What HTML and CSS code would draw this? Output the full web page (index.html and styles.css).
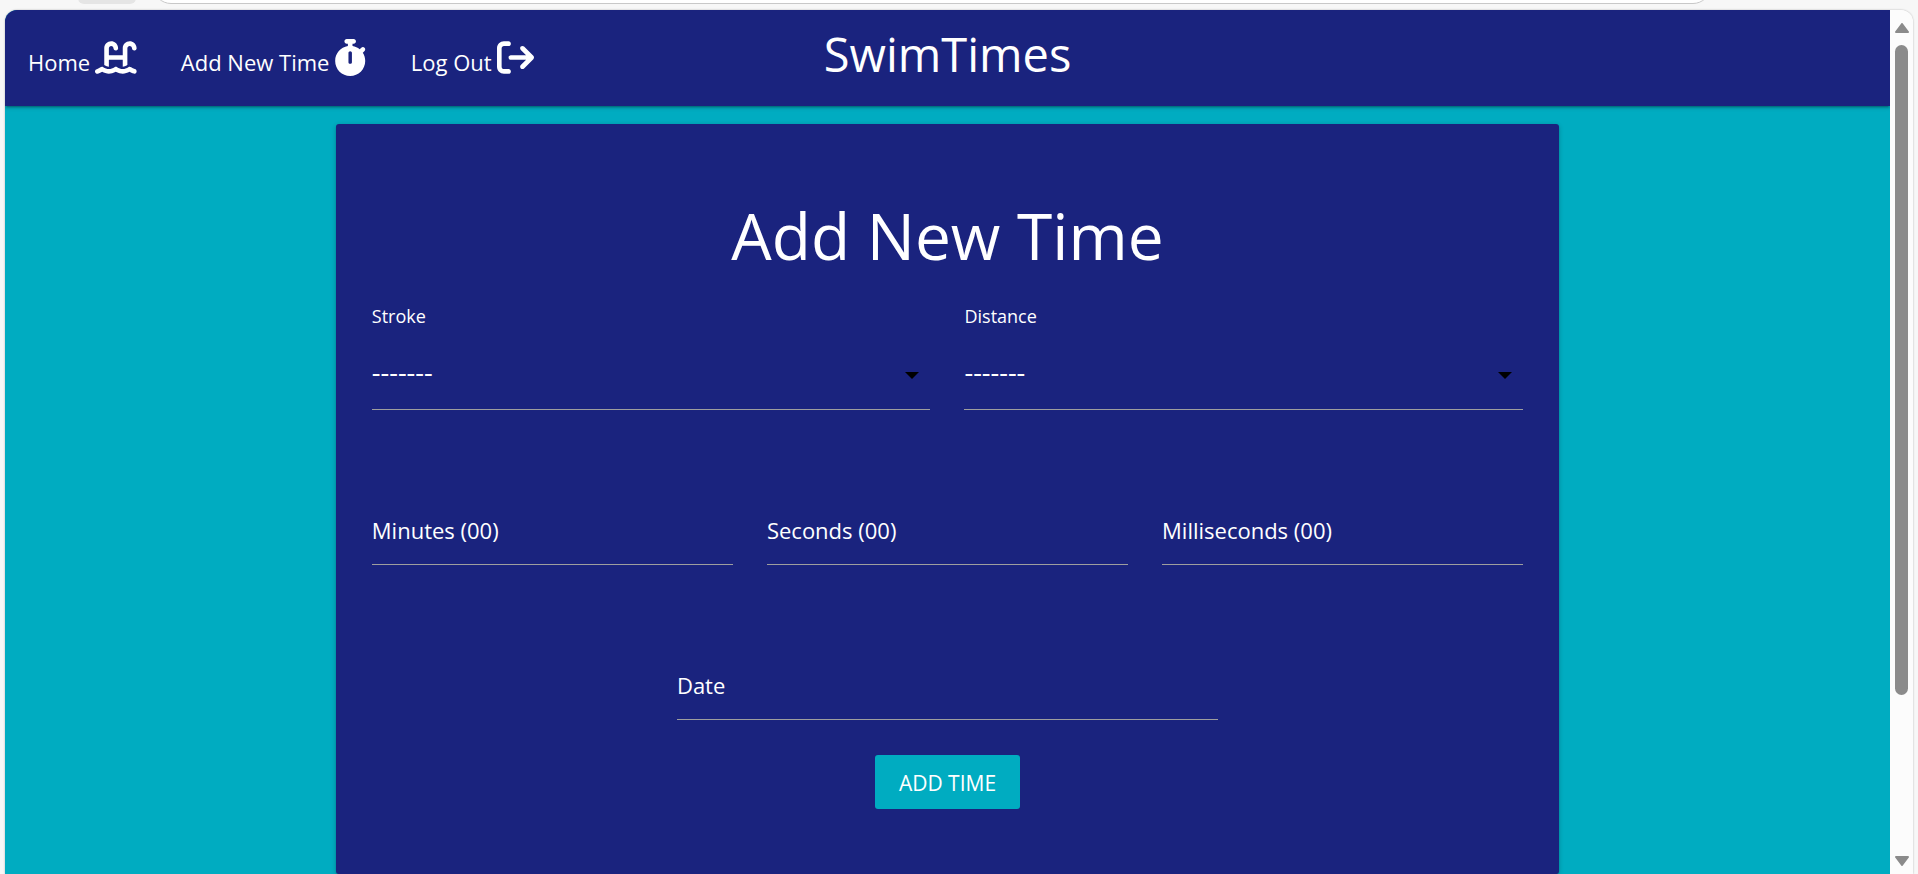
FILE: index.html
```html
<!DOCTYPE html>
<html lang="en">
<head>
<meta charset="utf-8">
<title>SwimTimes - Add New Time</title>
<link rel="stylesheet" href="styles.css">
</head>
<body>
<div class="toolbar" aria-hidden="true">
  <div class="toolbar-chip"></div>
  <div class="toolbar-address"></div>
</div>
<div class="window">
  <div class="page">
    <nav class="navbar">
      <div class="nav-links">
        <a class="nav-link" href="#">Home
          <svg class="icon" viewBox="0 0 576 512" aria-hidden="true"><path d="M128 127.7C128 74.9 170.9 32 223.7 32c48.3 0 89 36 95 83.9l1 8.2c2.2 17.5-10.2 33.5-27.8 35.7s-33.5-10.2-35.7-27.8l-1-8.2c-2-15.9-15.5-27.8-31.5-27.8c-17.5 0-31.7 14.2-31.7 31.7V224H384V127.7C384 74.9 426.9 32 479.7 32c48.3 0 89 36 95 83.9l1 8.2c2.2 17.5-10.2 33.5-27.8 35.7s-33.5-10.2-35.7-27.8l-1-8.2c-2-15.9-15.5-27.8-31.5-27.8c-17.5 0-31.7 14.2-31.7 31.7V361c-1.6 1-3.3 2-4.8 3.1c-18 12.4-40.1 20.3-59.2 20.3h0V288H192v96.5c-19 0-41.2-7.9-59.1-20.3c-1.6-1.1-3.2-2.2-4.9-3.1V127.7zM306.5 389.9C329 405.4 356.5 416 384 416c26.9 0 55.4-10.8 77.4-26.1l0 0c11.9-8.5 28.1-7.8 39.2 1.7c14.4 11.9 32.5 21 50.6 25.2c17.2 4 27.9 21.2 23.9 38.4s-21.2 27.9-38.4 23.9c-24.5-5.7-44.9-16.5-58.2-25C449.5 469.7 417 480 384 480c-31.9 0-60.6-9.9-80.4-18.9c-5.8-2.7-11.1-5.3-15.6-7.7c-4.5 2.4-9.7 5.1-15.6 7.7c-19.8 9-48.5 18.9-80.4 18.9c-33 0-65.5-10.3-94.5-25.8c-13.4 8.4-33.7 19.3-58.2 25c-17.2 4-34.4-6.7-38.4-23.9s6.7-34.4 23.9-38.4c18.1-4.2 36.2-13.3 50.6-25.2c11.1-9.4 27.3-10.1 39.2-1.7l0 0C136.7 405.2 165.1 416 192 416c27.5 0 55-10.6 77.5-26.1c11.1-7.9 25.9-7.9 37 0z"/></svg>
        </a>
        <a class="nav-link" href="#">Add New Time
          <svg class="icon" viewBox="0 0 448 512" aria-hidden="true"><path d="M176 0c-17.7 0-32 14.3-32 32s14.3 32 32 32h16V98.4C92.3 113.8 16 200 16 304c0 114.9 93.1 208 208 208s208-93.1 208-208c0-41.8-12.3-80.7-33.5-113.2l24.1-24.1c12.5-12.5 12.5-32.8 0-45.3s-32.8-12.5-45.3 0L355.7 143c-28.1-23-62.2-38.8-99.7-44.6V64h16c17.7 0 32-14.3 32-32s-14.3-32-32-32H176zm72 192V320c0 13.3-10.7 24-24 24s-24-10.7-24-24V192c0-13.3 10.7-24 24-24s24 10.7 24 24z"/></svg>
        </a>
        <a class="nav-link" href="#">Log Out
          <svg class="icon" viewBox="0 0 512 512" aria-hidden="true"><path d="M502.6 278.6c12.5-12.5 12.5-32.8 0-45.3l-128-128c-12.5-12.5-32.8-12.5-45.3 0s-12.5 32.8 0 45.3L402.7 224 192 224c-17.7 0-32 14.3-32 32s14.3 32 32 32l210.7 0-73.4 73.4c-12.5 12.5-12.5 32.8 0 45.3s32.8 12.5 45.3 0l128-128zM160 96c17.7 0 32-14.3 32-32s-14.3-32-32-32L96 32C43 32 0 75 0 128L0 384c0 53 43 96 96 96l64 0c17.7 0 32-14.3 32-32s-14.3-32-32-32l-64 0c-17.7 0-32-14.3-32-32l0-256c0-17.7 14.3-32 32-32l64 0z"/></svg>
        </a>
      </div>
      <a class="brand" href="#">SwimTimes</a>
    </nav>
    <main class="content">
      <form class="card">
        <h1 class="card-title">Add New Time</h1>
        <div class="row row-two">
          <div class="select-field">
            <label class="select-label" for="stroke">Stroke</label>
            <div class="select-box">
              <select class="select" id="stroke"><option>-------</option></select>
            </div>
          </div>
          <div class="select-field">
            <label class="select-label" for="distance">Distance</label>
            <div class="select-box">
              <select class="select" id="distance"><option>-------</option></select>
            </div>
          </div>
        </div>
        <div class="row row-three">
          <div class="field"><input class="input" id="minutes" type="text"><label class="label" for="minutes">Minutes (00)</label></div>
          <div class="field"><input class="input" id="seconds" type="text"><label class="label" for="seconds">Seconds (00)</label></div>
          <div class="field"><input class="input" id="milliseconds" type="text"><label class="label" for="milliseconds">Milliseconds (00)</label></div>
        </div>
        <div class="row row-date">
          <div class="field"><input class="input" id="date" type="text"><label class="label" for="date">Date</label></div>
        </div>
        <button class="submit" type="button">ADD TIME</button>
      </form>
    </main>
  </div>
  <div class="scrollbar" aria-hidden="true">
    <svg class="arrow" viewBox="0 0 14 10"><path d="M7 1L13 9H1Z"/></svg>
    <div class="track"><div class="thumb"></div></div>
    <svg class="arrow" viewBox="0 0 14 10"><path d="M7 9L13 1H1Z"/></svg>
  </div>
</div>
</body>
</html>
```
FILE: styles.css
```css
* {
  box-sizing: border-box;
}

body {
  margin: 0;
  height: 100vh;
  overflow: hidden;
  display: flex;
  flex-direction: column;
  background: #f7f7f7;
  color: #fff;
  font-family: "Open Sans", "Noto Sans", sans-serif;
  font-size: 22px;
}

/* Browser toolbar edge */
.toolbar {
  flex: none;
  display: flex;
  align-items: flex-end;
  height: 10px;
  padding: 0 207px 6px 78px;
  overflow: hidden;
}

.toolbar-chip {
  width: 58px;
  height: 30px;
  margin-right: 17px;
  border-radius: 6px;
  background: #e5e5e5;
}

.toolbar-address {
  flex: 1;
  height: 36px;
  border: 1px solid #c8c8c8;
  border-radius: 18px;
  background: #fff;
}

.window {
  flex: 1;
  min-height: 0;
  display: flex;
  margin: 0 5px;
  border-radius: 12px 12px 0 0;
  overflow: hidden;
  box-shadow: 0 0 2px rgba(0, 0, 0, 0.3);
}

.page {
  flex: 1;
  overflow: hidden;
  background: #00acc1;
}

/* Navigation */
.navbar {
  display: grid;
  grid-template-columns: 1fr auto 1fr;
  align-items: center;
  height: 96px;
  padding: 0 23px;
  background: #1a237e;
  box-shadow: 0 2px 2px 0 rgba(0, 0, 0, 0.14),
    0 3px 1px -2px rgba(0, 0, 0, 0.12), 0 1px 5px 0 rgba(0, 0, 0, 0.2);
}

.nav-links {
  display: flex;
  gap: 44px;
  padding-bottom: 2px;
}

.nav-link {
  display: flex;
  align-items: flex-end;
  gap: 5px;
  color: #fff;
  line-height: 28px;
  text-decoration: none;
  white-space: nowrap;
}

.icon {
  height: 37px;
  fill: #fff;
}

.brand {
  padding-bottom: 8px;
  color: #fff;
  font-size: 47px;
  line-height: 60px;
  text-decoration: none;
}

/* Form card */
.content {
  display: flex;
  justify-content: center;
  padding-top: 18px;
}

.card {
  display: flex;
  flex-direction: column;
  align-items: center;
  width: 64.9%;
  padding: 68px 36px 65px;
  border-radius: 3px;
  background: #1a237e;
  box-shadow: 0 2px 2px 0 rgba(0, 0, 0, 0.14),
    0 3px 1px -2px rgba(0, 0, 0, 0.12), 0 1px 5px 0 rgba(0, 0, 0, 0.2);
}

.card-title {
  margin: 0 0 24px;
  font-size: 64px;
  font-weight: 400;
  line-height: 88px;
}

.row {
  display: grid;
  gap: 34px;
  width: 100%;
}

.row-two {
  grid-template-columns: repeat(2, 1fr);
}

.row-three {
  grid-template-columns: repeat(3, 1fr);
  margin-top: 85px;
}

.row-date {
  width: 47%;
  margin-top: 85px;
}

.select-label {
  display: block;
  margin-bottom: 12px;
  font-size: 18px;
  line-height: 24px;
}

.select-box,
.field {
  display: grid;
  align-items: center;
}

.select-box::after {
  content: "";
  grid-area: 1 / 1;
  justify-self: end;
  margin-right: 11px;
  border: 7px solid transparent;
  border-top-color: #000;
  border-bottom-width: 0;
  pointer-events: none;
}

.select,
.input {
  grid-area: 1 / 1;
  width: 100%;
  height: 70px;
  margin: 0;
  padding: 0;
  border: 0;
  border-bottom: 1px solid #9e9e9e;
  border-radius: 0;
  outline: 0;
  background: transparent;
  color: #fff;
  font-family: inherit;
  font-size: 22px;
}

.select {
  appearance: none;
  padding-bottom: 6px;
  font-size: 27px;
}

.label {
  grid-area: 1 / 1;
  justify-self: start;
  line-height: 30px;
  pointer-events: none;
}

.submit {
  height: 54px;
  margin-top: 35px;
  padding: 1px 24px 0;
  border: 0;
  border-radius: 3px;
  background: #00acc1;
  color: #fff;
  font-family: inherit;
  font-size: 21px;
}

/* Scrollbar */
.scrollbar {
  flex: none;
  display: flex;
  flex-direction: column;
  align-items: center;
  gap: 12px;
  width: 23px;
  padding: 13px 0 8px;
  background: #fcfcfc;
}

.arrow {
  width: 14px;
  height: 10px;
  fill: #8b8b8b;
  stroke: #8b8b8b;
  stroke-width: 2;
  stroke-linejoin: round;
}

.track {
  flex: 1;
}

.thumb {
  width: 13px;
  height: 81.4%;
  border-radius: 7px;
  background: #8b8b8b;
}
```
